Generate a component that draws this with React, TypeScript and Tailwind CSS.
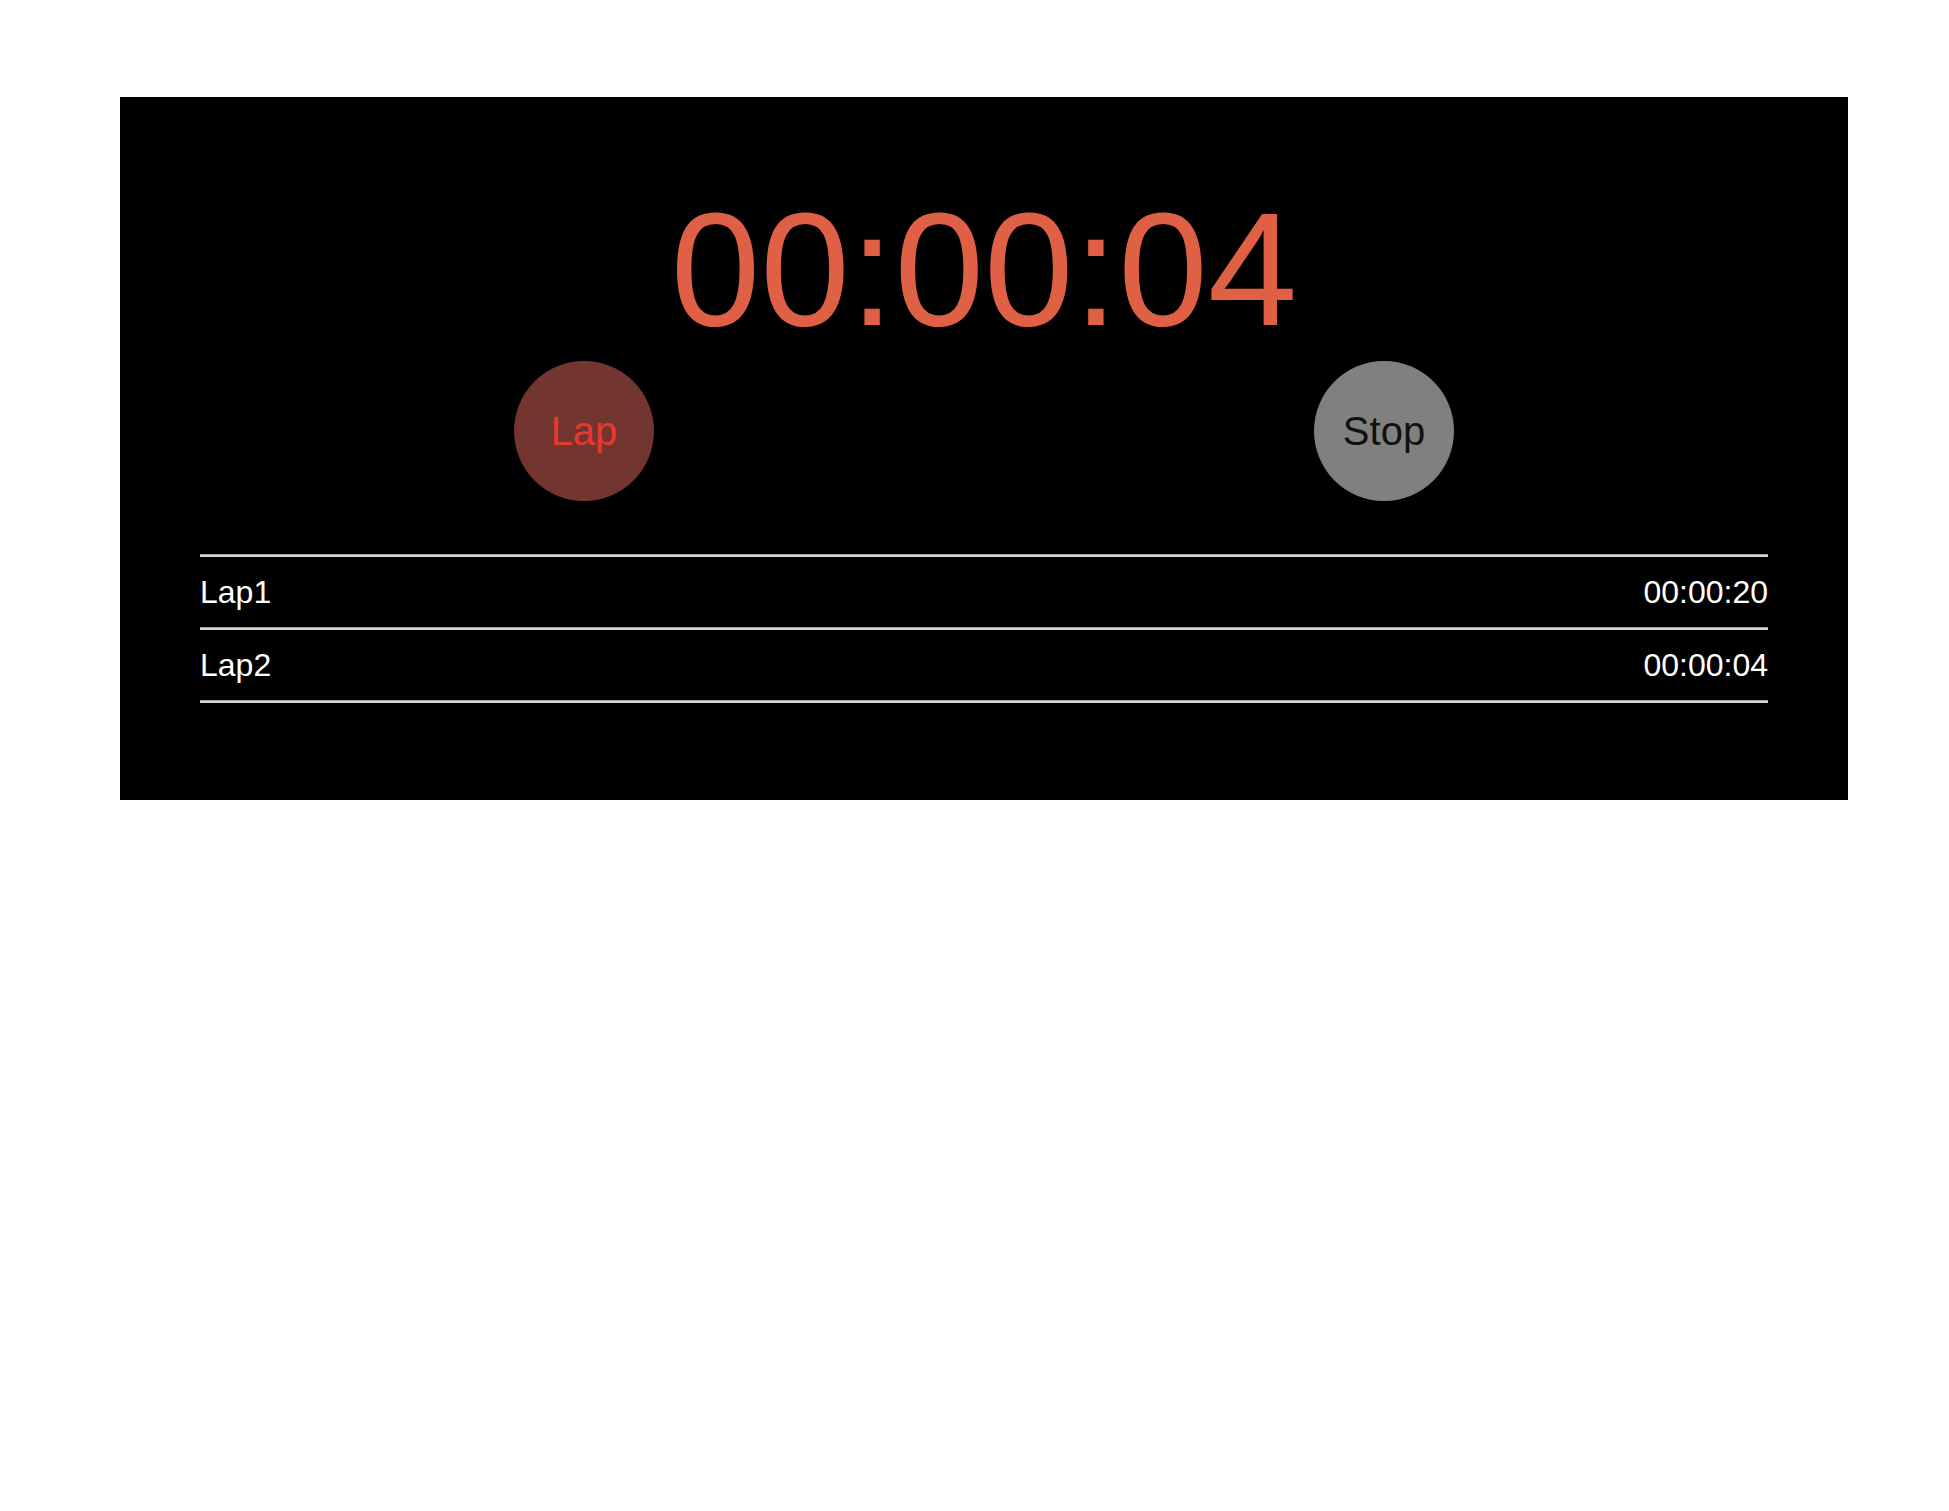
import React from "react";

const laps = [
  { name: "Lap1", time: "00:00:20" },
  { name: "Lap2", time: "00:00:04" },
];

function Divider() {
  return <div className="h-[3px] border-t border-b-2 border-t-[#a0a0a0] border-b-[#d8d8d8]" />;
}

export default function App() {
  return (
    <div
      className="min-h-[1511px] w-full bg-white pt-[97px]"
      style={{ fontFamily: '"Liberation Sans", Arial, Helvetica, sans-serif' }}
    >
      <div className="ml-[120px] w-[1728px] bg-black px-[80px] pt-[82px] pb-[97px]">
        <div className="h-[181px] text-center text-[161px] leading-[181px] text-[#e06045]">
          00:00:04
        </div>
        <div className="mt-px flex justify-center">
          <div className="flex w-[940px] justify-between">
            <button className="flex h-[140px] w-[140px] items-center justify-center rounded-full bg-[#723530] text-[40px] text-[#e8392c]">
              Lap
            </button>
            <button className="flex h-[140px] w-[140px] items-center justify-center rounded-full bg-[#808080] text-[40px] text-[#111111]">
              Stop
            </button>
          </div>
        </div>
        <div className="mt-[53px]">
          <Divider />
          {laps.map((lap) => (
            <React.Fragment key={lap.name}>
              <div className="flex h-[70px] items-center justify-between text-[32px] text-white">
                <span>{lap.name}</span>
                <span>{lap.time}</span>
              </div>
              <Divider />
            </React.Fragment>
          ))}
        </div>
      </div>
    </div>
  );
}
